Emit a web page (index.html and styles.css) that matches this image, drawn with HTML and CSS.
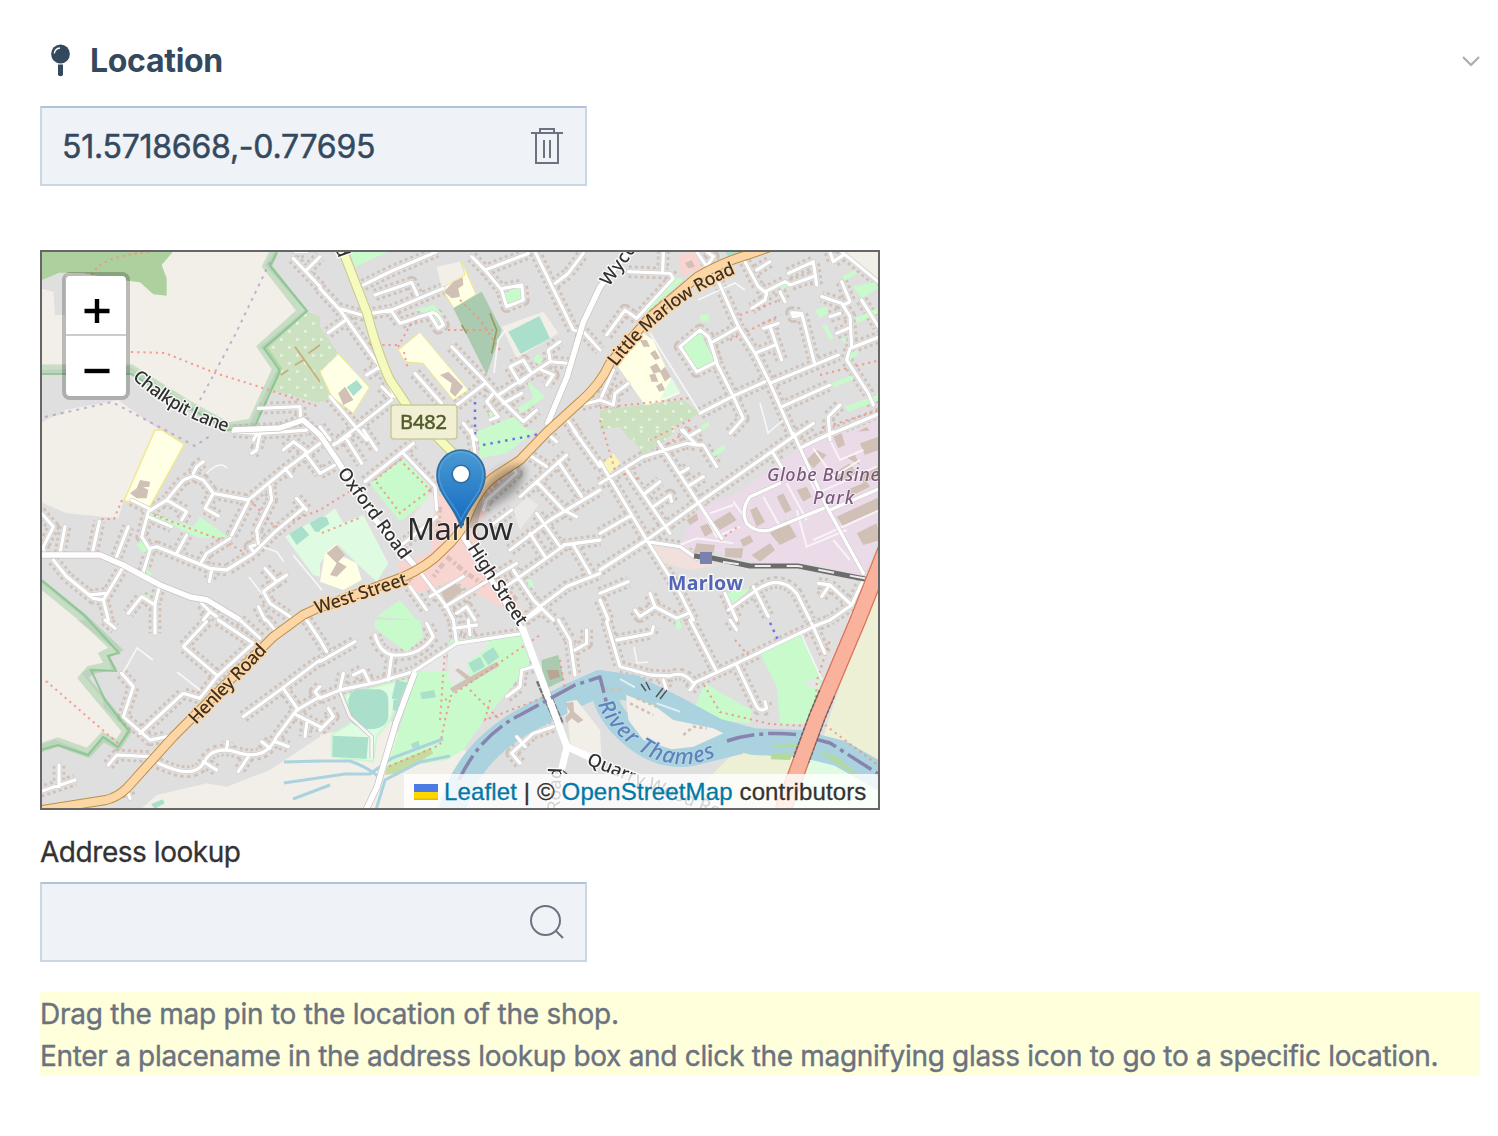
FILE: index.html
```html
<!DOCTYPE html>
<html lang="en">
<head>
<meta charset="utf-8">
<title>Location</title>
<link rel="stylesheet" href="styles.css">
</head>
<body>
<main class="panel">
  <header class="panel-head">
    <svg class="pin-icon" viewBox="0 0 22 34"><circle cx="10.500" cy="10" r="9.400" fill="#34495e"/><path d="M4.300 9.500Q5 4.500 10 4" fill="none" stroke="#fff" stroke-width="1.300"/><path d="M8 20.500H13V31Q10.500 33.500 8 31Z" fill="#34495e"/></svg>
    <h2 class="title">Location</h2>
    <svg class="chevron" viewBox="0 0 20 12"><path d="M2 2L10 10L18 2" fill="none" stroke="#a9adb3" stroke-width="2.200"/></svg>
  </header>

  <div class="field">
    <span class="value">51.5718668,-0.77695</span>
    <svg class="field-icon" viewBox="0 0 36 40"><path d="M2 7H34M11 6V3H25V6M7 8V37H29V8M15 14V32M21 14V32" fill="none" stroke="#6c7380" stroke-width="2"/></svg>
  </div>

  <div class="map">
    <svg class="tiles" viewBox="42 252 836 556">
      <defs>
        <pattern id="trees" width="48" height="48" patternUnits="userSpaceOnUse"><rect width="48" height="48" fill="#cbe1bf"/><circle cx="4" cy="28" r="5" fill="#e6f1de"/><circle cx="28" cy="4" r="5" fill="#e6f1de"/></pattern>
        <linearGradient id="pin" x2="0" y2="1"><stop offset="0" stop-color="#4a9bd4"/><stop offset="1" stop-color="#1268bf"/></linearGradient>
        <filter id="soft" x="-50%" y="-50%" width="200%" height="200%"><feGaussianBlur stdDeviation="4.500"/></filter>
        <g id="streets" fill="none" stroke-linejoin="round">
          <path transform="translate(40 250) scale(.33333)" d="M760 25L840 110M655 475L780 470L782 510M655 545L640 570M800 60L840 20M765 5L800 5M580 540L720 535L785 510L840 560"/>
          <path transform="translate(320 250) scale(.33333)" d="M0 115L60 180L180 350L225 440M55 175L125 195L215 180L370 115M130 105L210 65L350 5M165 135L275 97L292 135M212 180L240 220L330 190Q350 180 370 225L355 235L330 195M25 248L75 212M140 375L180 350M395 290L495 395L530 435L610 515L650 480M285 370L365 460M410 465L495 400M535 435L690 335L745 340M690 330L685 300L720 275M570 350L600 400L635 370L610 330ZM520 430L500 455L535 500L510 510M550 460L605 430M665 360L700 375L680 405M455 20L495 60L625 10M495 60L545 120L560 170L610 150L605 105L550 115M645 5L760 240L780 245M790 245L840 300M705 100L745 70L790 10M60 570L120 525L215 450M30 440L140 570M185 410L215 440M0 530L30 570M430 520L470 570M735 500L770 550M785 465L840 450"/>
          <path transform="translate(600 250) scale(.33333)" d="M20 255L75 180L110 205L220 85L210 70L85 65M188 65L190 5M290 5L320 50L340 20L320 5M355 95L415 230L465 310L510 400L580 560M340 275L415 232M240 290L300 240L325 260L350 335L290 365ZM330 270L350 340L400 440L430 505L390 550M300 490L400 438L495 395M510 400L715 315M545 470L690 405M465 310L525 285M490 235L535 220M512 235L545 330M605 195L580 200L575 188L605 190L645 345M435 35L475 110L500 130L495 150L455 175M495 125L555 95L570 105L640 80M470 60L510 35M565 70L640 35L650 105M540 125L555 155M725 5L840 100M690 5L700 35L730 15M580 560L640 520M650 570L840 490M690 570L685 500L720 465M820 465L805 430L740 330L750 295L840 260M755 290L750 200L725 160L665 140M725 95L750 155L730 165M690 200L720 190M710 250L745 235M785 150L835 230M250 540L265 560L300 540M0 450L40 465L45 430L85 400M40 360L5 440"/>
          <path transform="translate(40 430) scale(.33333)" d="M0 245L40 290L10 350L15 380M60 370L75 290M158 365L178 275M230 380L265 290M40 390L80 440L160 505L190 510L250 410M190 510L205 570M150 495L195 490M310 425L330 360L305 320L325 245L380 210L430 150L460 138L490 150L520 190L625 210L740 115L840 40M460 130L470 110L490 95M520 190L495 235L535 258M380 210L440 245L425 270M325 260L395 290M275 210L335 240M330 355L350 350L510 415L560 420L640 370L700 310L790 235M770 205L800 240M410 370L440 315M485 395L500 370L570 325M575 315L625 215M690 170L695 210L650 300L655 340M640 365L630 350L645 345M515 420L508 455M735 115L755 140M800 65L760 35L730 60M795 70L840 130M580 5L660 10L740 5L800 0M660 10L650 60L635 70M360 465L345 520L345 570M345 525L305 500L265 550M485 520L510 545L490 570M510 545L530 560M675 415L710 455L670 485L690 520L750 560M710 455L740 435M655 530L675 570"/>
          <path transform="translate(320 430) scale(.33333)" d="M135 155L280 40M250 70L345 170L350 240M75 20L125 100M0 130L45 105M40 45L90 15M130 0L170 60M245 345L350 260M455 0L465 70M490 240L500 210L590 130L575 105M600 200L740 75M620 70L680 110M650 155L730 240L770 260M715 95L785 200M570 360L690 270L840 180M630 310L675 380M720 350L650 250M730 345L840 330M375 530L590 400M330 500L430 440M550 475L735 345M760 345L810 430M610 570L660 530L740 470L840 430M580 420L640 510L700 570M280 400L380 530L400 570M270 470L320 540M410 550L440 530L465 570M760 0L840 110M680 10L710 35M515 285L575 240"/>
          <path transform="translate(600 430) scale(.33333)" d="M0 420L140 330L300 215L580 20M0 95L140 330L240 490L280 570M80 120L210 310M175 35L365 325M0 160L130 80L260 40L290 45M245 0L290 45L310 45L350 110M580 10L680 230L790 430M600 55L700 5M690 240L840 175M540 160L450 200Q420 240 440 280Q470 310 510 300L670 235M520 70L550 120M135 190L180 155M160 230L210 195L215 215M240 130L265 115M270 165L310 140M0 310L95 255M140 335L240 350L290 385M0 490L85 455M0 510L25 570M375 490L410 570M385 540L470 480Q540 430 590 490L630 570M460 470L505 560M105 540L120 560L165 530L150 490M165 530L230 565L265 550M655 460L690 465L755 525L690 570M665 500L685 470M755 525L790 450"/>
          <path transform="translate(40 620) scale(.33333)" d="M195 0L225 25M345 0L345 40M500 5L430 80L530 165M535 0L640 70M600 0L660 55M680 0L705 30M640 70L530 170L480 235L430 220L300 340M245 160L280 200L250 290L330 360L380 350M205 435L230 405L330 410M355 430Q460 480 490 430Q520 370 600 400Q680 420 710 350L770 270L840 230M490 425L530 450M560 385L563 365M625 410L595 455M705 365L745 380M665 365L690 385M610 290L720 210L840 120M730 205L775 270M770 285L840 320M800 310L795 350M0 515L105 480M57 500L57 435M840 200L825 215L840 235M800 0L840 60M265 520L270 535"/>
          <path transform="translate(320 620) scale(.33333)" d="M0 235L60 210L180 185L280 155L410 70L610 40M165 45Q180 100 220 105Q300 110 340 50L320 10M215 105L205 180M410 70L400 0M0 125L105 65M60 205L70 160M100 165L130 150L150 190M0 60L20 95M0 330L40 290L25 265M400 25L470 15M450 45L445 0M560 230L600 200L605 150L640 140M600 430L575 400L640 340L700 320M590 350L615 380M715 0L750 60L765 165M765 90L800 70L800 30M615 0L660 -30"/>
          <path transform="translate(600 620) scale(.33333)" d="M20 5L60 140L150 165L210 168Q250 150 280 190L410 130L640 20L690 0M50 60L155 40L160 20M270 0L350 155M410 135L465 250Q475 280 500 265L495 245M635 10L675 100M190 180L200 210M390 0L410 30M270 210L285 190"/>
        </g>
        <path id="primary" d="M36 811L106 800Q118 797 127 788L173 737L273 637L303 615Q316 608 330 604L403 577Q428 566 443 550Q460 535 466 520Q478 487 497 475L520 460L547 432L580 402Q600 385 610 363L650 317L697 277Q720 263 747 255L770 247"/>
        <path id="collectors" d="M640 240L628 252L600 287L583 323L567 377L547 425M233 430L280 428L303 420L320 435L337 460L373 517L414 565M42 555L100 555L123 565L160 585L190 597L207 600L240 620M461 533L480 563L500 593L524 633M415 672L396 723L377 787L366 810"/>
        <path id="yellow" d="M341 246L367 313Q378 355 390 380L408 407L443 443L460 460"/>
        <path id="lane" d="M132 378Q175 418 237 435"/>
        <path id="oxford" d="M337 473L403 562"/>
        <path id="river" d="M598 704Q612 738 650 757Q690 774 727 750"/>
        <path id="littlemarlow" d="M616 367Q667 300 742 271"/>
      </defs>

      <g class="raster">
      <rect x="40" y="250" width="840" height="560" fill="#dfdfdf"/>
      <g class="buildings"><use href="#streets"/></g>
      <g class="clear"><use href="#streets"/></g>

      <g transform="translate(40 250) scale(.33333)">
        <path fill="#f2efe9" d="M0 0H705L675 45L795 180L660 290L715 350L630 520L560 525L440 460L270 350L0 360ZM0 520L75 480L235 450L400 570H0Z"/>
        <path fill="#dfdfdf" d="M0 90L75 65V195L45 195L40 125L0 115ZM0 380L50 390L75 490L0 510Z"/>
        <path fill="#add19e" d="M0 0H403L365 45L380 85V137L340 133L300 97L245 90L130 70L60 68L0 92Z"/>
        <path fill="url(#trees)" d="M840 200L800 185L675 290L715 355L690 420L840 460Z"/>
        <path fill="none" stroke="#c6ad72" stroke-width="5" d="M765 290L840 395M722 375L745 360M765 345L790 330M805 310L840 285"/>
      </g>
      <g transform="translate(320 250) scale(.33333)">
        <path fill="url(#trees)" d="M0 230L55 310L0 370ZM0 370L40 440L0 460Z"/>
        <path fill="#c8facc" d="M90 5L205 5L105 50ZM552 130L600 110L608 145L562 162ZM620 390L675 440L605 490L590 475L640 445ZM470 545L580 500L630 545L540 570H470ZM285 180L340 165L365 190L350 225L325 190ZM640 325L655 310L670 330L655 345ZM505 485L525 490L510 505Z"/>
        <path fill="#f2efe9" d="M350 50L420 35L435 75L365 115ZM545 230L670 185L715 250L590 325Z"/>
        <path fill="#ffffe5" stroke="#f0e88a" stroke-width="3" d="M365 115L435 75L425 35L468 133L402 175ZM235 300L300 247L445 420L400 450L310 340L255 335ZM0 365L55 312L148 412L100 490L35 440Z"/>
        <path fill="#aacbaf" d="M400 175L485 125L545 240L500 375Z"/>
        <path fill="none" stroke="#9a9a5c" stroke-width="5" d="M510 190L530 240L515 310M425 225L440 250"/>
        <path fill="#aae0cb" d="M565 245L658 198L690 265L602 312ZM80 412L110 390L128 412L100 438Z"/>
        <path fill="#d0c0b6" d="M372 125L400 95L428 82L430 105L415 115L420 140L395 145ZM360 375L385 365L430 410L405 440L390 425L395 400ZM55 430L75 410L100 450L70 465Z"/>
      </g>
      <g transform="translate(600 250) scale(.33333)">
        <path fill="#f2efe9" d="M730 0H840V90Z"/>
        <path fill="#f8d5d1" d="M235 15L285 5L305 55L245 80Z"/>
        <path fill="#aae0cb" d="M375 5H450L390 25Z"/>
        <path fill="url(#trees)" d="M0 480L250 450L300 490L150 570H90L60 530L0 540Z"/>
        <path fill="#ffffe5" d="M50 345L130 250L160 270L210 380L240 430L180 455L135 465Z"/>
        <path fill="#dffce2" d="M200 410L215 385L240 425L180 450Z"/>
        <path fill="#c8facc" d="M250 290L300 245L345 335L290 360ZM300 195L328 192L325 215L302 213ZM110 195L230 80L250 90L120 205ZM540 108L560 98L562 112L545 120ZM725 80L765 60L770 72L735 92ZM760 110L825 95L835 115L785 145ZM645 180L680 170L685 190L660 205ZM665 225L680 225L700 265L690 270ZM695 400L755 375L760 390L700 412ZM735 470L840 430V450L745 485ZM300 530L325 515L330 525L305 543ZM765 205L830 175L835 190L770 220ZM740 315L770 300L775 312L745 335ZM720 265L740 265L735 280Z"/>
        <path fill="#ebdbe8" d="M690 570L840 505V570Z"/>
        <path fill="#d0c0b6" d="M120 270L140 270L150 290L130 290ZM150 310L165 300L180 325L165 330ZM150 350L170 340L185 365L160 370ZM148 375L165 370L175 395L155 395ZM180 365L195 350L212 380L195 395ZM168 408L185 398L195 420L178 425ZM765 550L800 530L830 570H770ZM255 40L275 30L285 50L265 55Z"/>
      </g>
      <g transform="translate(40 430) scale(.33333)">
        <path fill="#f2efe9" d="M0 0H355L250 215L235 265L80 250L0 215ZM0 455L140 570H0Z"/>
        <path fill="#ffffe5" stroke="#f0e88a" stroke-width="4" d="M345 0L365 0L433 43L330 230L252 212Z"/>
        <path fill="#c8facc" d="M300 240L460 290L480 260L565 320L480 325L330 255ZM290 345L310 330L328 358L310 370ZM315 415L340 430L325 440ZM305 490L330 500L325 510Z"/>
        <path fill="#dffce2" d="M735 320L840 260V440L820 435Z"/>
        <path fill="#aae0cb" d="M748 312L785 288L808 315L770 345ZM808 280L840 260V305H825Z"/>
        <path fill="#d0c0b6" d="M300 150L330 155L328 170L310 172L325 180L320 205L290 205L270 190L290 175Z"/>
      </g>
      <g transform="translate(320 430) scale(.33333)">
        <path fill="#f8d5d1" d="M350 200L400 180L500 120L570 130L490 220L500 240L470 300L480 330L460 370L480 400L560 480L620 560L580 540L520 520L400 450L330 480L270 490L230 400L330 370Z"/>
        <path fill="none" stroke="#dcc0b8" stroke-width="14" stroke-dasharray="18 9 8 7" d="M360 230L350 330M490 200L550 140M440 340L470 370L530 440L590 510M340 390L290 420L260 460M380 380L440 430L500 470M370 400L340 440"/>
        <path fill="#eae9e7" d="M270 270L330 190L355 200L340 270L300 290ZM580 240L620 200L655 225L600 300Z"/>
        <path fill="#c8facc" d="M150 160L250 85L330 170L320 210L240 275ZM475 5L650 0L560 70L480 85ZM170 560L240 510L290 570ZM618 445L635 450L645 480L625 465Z"/>
        <path fill="#dffce2" d="M0 270L45 235L70 280L130 255L205 400L170 455L110 400L50 340L0 400Z"/>
        <path fill="#aae0cb" d="M0 260L20 262L28 282L0 300Z"/>
        <path fill="#ffffe5" d="M15 370L50 340L70 380L110 400L125 450L70 480L0 455Z"/>
        <path fill="#d0c0b6" d="M20 370L50 345L75 375L55 395L80 410L50 440L30 435L50 400ZM360 480L400 455L430 480L380 520ZM430 250L445 260L460 215L490 200L470 300L440 290Z"/>
      </g>
      <g transform="translate(600 430) scale(.33333)">
        <path fill="#ebdbe8" d="M240 350L290 240L430 180L590 60L700 10L840 0V320L790 440L640 400L480 400L330 360Z"/>
        <path fill="#f2e0dc" d="M150 345L240 360L290 395L360 405L270 420L190 400Z"/>
        <path fill="url(#trees)" d="M80 0H230L190 35L130 75Z"/>
        <path fill="#f8f3b8" d="M5 105L40 70L62 100L30 130Z"/>
        <path fill="#c8facc" d="M335 70L370 45L378 58L342 80ZM370 490L455 475L390 528Z"/>
        <path fill="#d0c0b6" d="M290 340L345 345L340 370L280 370ZM375 355L430 355L425 385L375 380ZM455 375L510 340L525 360L480 395ZM510 310L560 270L590 320L540 345ZM620 90L650 60L680 75L640 115ZM710 260L840 200V240L730 290ZM340 275L390 245L410 270L360 300ZM300 290L325 280L340 305L315 320ZM450 240L470 230L495 275L470 290ZM530 200L550 190L575 240L555 250ZM700 130L750 100L770 130L720 155ZM770 310L830 280L840 330L790 345ZM700 20L725 10L735 45L715 55ZM420 330L450 315L460 335L430 350ZM735 80L765 75L780 105ZM590 180L620 170L635 200L610 215ZM780 40L835 20V60L795 75ZM780 130L835 110V140L790 160ZM740 180L800 155L810 170L750 200ZM260 270L290 250L295 270L270 285Z"/>
        <path fill="none" stroke="#f8f3f7" stroke-width="6" d="M640 55L700 140L780 90M610 110L650 190L830 110M490 200L540 290M590 240L620 350L740 300M640 330L840 240M300 230L350 320L420 290M400 215L440 270M690 30L720 90L790 60M240 345L290 325L400 340M330 250L400 225M560 160L620 270M700 330L750 390"/>
      </g>
      <g transform="translate(40 620) scale(.33333)">
        <path fill="#f2efe9" d="M0 0H110L235 95L200 105L215 150L150 145L125 160L190 240V260L260 330L235 375L190 345L145 400L45 360L0 375ZM300 570L350 525L500 490L560 500L690 450L840 350V570Z"/>
        <path fill="#aae0cb" d="M333 552L368 538L374 550L345 566Z"/>
      </g>
      <g transform="translate(320 620) scale(.33333)">
        <path fill="#f2efe9" d="M0 345L210 300L270 400L440 390L380 570H0Z"/>
        <path fill="#c8facc" d="M290 155H380L390 60L600 45L630 130L560 220L500 290L430 390L380 420L200 450ZM165 0H300L310 50L260 95L210 60L165 25ZM505 60L600 40L600 60Z"/>
        <path fill="#dffce2" stroke="#c8facc" stroke-width="5" d="M75 225L210 190L260 180L210 300L170 350L160 425L35 410V345L100 305Z"/>
        <path fill="#aae0cb" d="M110 208H180Q205 215 205 240V290Q200 325 150 328Q90 325 85 280V240Q90 215 110 208ZM38 347L145 352L140 417L37 410ZM228 180L262 188L240 240L215 236ZM220 240L242 238L235 275L218 270ZM445 130L480 110L495 140L460 158ZM485 105L520 82L538 110L505 135ZM300 218L342 210L348 232L306 238ZM272 372L295 362L300 378L280 388Z"/>
        <path fill="#e9e8e8" d="M385 75L505 60L500 85L440 130L450 160L400 200L385 170ZM285 155L380 90L375 155Z"/>
        <path fill="#d0c0b6" d="M390 205L530 125L538 138L400 218ZM405 150L415 145L450 170L440 180Z"/>
        <path fill="#aacbaf" d="M665 120L715 105L732 180L670 210Z"/>
        <path fill="#b9a595" d="M680 150L715 150L720 170L690 180Z"/>
        <path fill="#c6dba0" d="M200 440L330 385L340 400L240 460L195 465Z"/>
        <path fill="none" stroke="#cdc6c4" stroke-width="13" d="M60 215L90 290L155 350L155 415"/>
        <path fill="none" stroke="#f7f7f7" stroke-width="8" d="M60 215L90 290L155 350L155 415"/>
      </g>
      <g transform="translate(600 620) scale(.33333)">
        <path fill="#eef0d5" d="M815 -90L840 -120V470L670 350ZM320 480L400 400L520 400L600 400V570H320Z"/>
        <path fill="#c8facc" d="M480 100L600 45L665 175L640 310L540 315L530 200ZM315 190L400 240L455 270L450 310L350 300L280 270ZM225 0H240L245 25L230 30Z"/>
        <path fill="#e8e6e6" d="M612 190L655 170V210Z"/>
        <path fill="#dffce2" d="M625 400L840 470V570H570Z"/>
        <path fill="none" stroke="#aad3df" stroke-width="80" stroke-linejoin="round" d="M-450 600Q-420 420 -240 310L-90 230L0 190L100 205L220 265L350 335L460 365L600 370L720 400L860 480"/>
        <path fill="none" stroke="#aad3df" stroke-width="74" stroke-linejoin="round" d="M10 190Q10 270 90 340Q180 420 280 400L420 365"/>
        <path fill="#f2efe9" d="M78 225L160 255L220 300L340 325L370 340L280 380L215 388L130 360L85 300Z"/>
        <path fill="none" stroke="#d0c0b6" stroke-width="8" stroke-dasharray="10 9" d="M15 205L70 212M110 235L170 260M90 250L160 285M250 345L280 320L320 325"/>
        <path fill="#f2efe9" d="M-100 245L-70 240L0 330L5 420L-90 370Z"/>
        <path fill="#d0c0b6" d="M-105 250L-80 245L-78 275L-50 300L-65 310L-85 295L-100 310L-105 295L-90 275Z"/>
        <path fill="#b3d99b" d="M515 402L580 400L570 420L512 418ZM515 375L600 372L600 382H520ZM650 390L710 410L780 470L740 450Z"/>
        <path stroke="#e4eff2" stroke-width="6" d="M60 177L105 202M170 250L240 275"/>
      </g>

      <g fill="none" stroke="#aad3df" stroke-width="3"><path d="M284 762L320 761L350 761Q365 766 378 776M284 783L345 774L370 774L392 758L443 739M293 799L330 785M376 810L385 780L420 762L450 756"/></g>
      <g fill="none" stroke="#86c28c" opacity=".4" stroke-width="9"><path d="M274 252L267 266L302 311L262 347L277 369L252 423L228 427L190 406L131 369L42 369M40 583L82 617L116 649L104 655L110 666L90 670L83 678L103 702L127 731L118 745L103 737L88 753L58 742L40 748"/></g>
      <g fill="none" stroke="#7fc185" opacity=".75" stroke-width="2"><path d="M277 252L270 266L307 311L264 348L280 371L255 426L228 430L131 374L42 374M40 579L84 615L119 653L108 656L116 671L91 670L105 700L129 731L118 747L103 737L88 755L58 745L40 750"/></g>
      <g class="paths"><path d="M131 352L165 353L215 373L260 387L320 407M92 275Q100 256 150 252M46 681L120 745M122 500L114 519L100 519M154 515L205 534L225 541L243 552M250 500L275 527L320 510L355 488M450 700L445 720L440 745L380 770M445 700L540 635M490 700L485 720L550 695M470 690L500 720M704 685L720 712L770 724L810 726M398 347L410 325L425 315M404 352L408 370M370 345L400 345M460 300L480 320L500 350M448 330L495 330M600 408L690 398M690 420L650 440M820 375L880 360M822 428L880 410M740 315L780 300M730 340L780 315M735 640L748 655M825 725L878 765M445 650L440 720M375 480L400 460L430 490L400 513ZM322 533L362 517M600 420L615 470L640 480M690 430L640 460M815 710L817 680L830 640M560 660L565 690M720 540L740 525"/></g>
      <g fill="none" stroke="#b49bc4" opacity=".75" stroke-width="2" stroke-dasharray="3 5"><path d="M270 262L235 335L200 400M45 417L112 402L165 430L195 446L210 436"/></g>
      <g fill="none" stroke="#6a74e8" stroke-width="2.500" stroke-dasharray="2.500 5"><path d="M475 402V440M483 445L540 434M767 616L778 640"/></g>

      <g fill="none" stroke="#f7f7f7" stroke-width="1.600"><path d="M650 333L700 413M760 403L768 433L783 420M698 300L735 283L745 290M494 373L498 340L506 330M293 555L322 590M263 547L277 552L284 562M207 473Q220 460 227 468M122 675L137 648L153 660M177 672L200 690M801 634L822 680M634 647L637 663L648 662M249 577L262 594"/></g>
      <g class="casing"><use href="#streets"/></g>
      <g class="surface"><use href="#streets"/></g>
      <g fill="none" stroke-linejoin="round">
        <use href="#collectors" stroke="#c8c4c4" stroke-width="7"/>
        <use href="#collectors" stroke="#fff" stroke-width="5.500"/>
        <path stroke="#777" stroke-width="9" stroke-dasharray="6 1" d="M540 680L560 725"/>
        <path stroke="#fff" stroke-width="7" d="M522 627L567 747L561 772M566 746L600 762"/>
        <path stroke="#8884ae" stroke-width="3.500" stroke-dasharray="28 5 4 5" d="M459 780Q480 735 520 715L575 685L600 677L607 705M727 741Q760 730 800 735L830 743L880 775"/>
        <use href="#yellow" stroke="#c5cc82" stroke-width="10"/>
        <use href="#yellow" stroke="#f7fabf" stroke-width="8"/>
        <use href="#primary" stroke="#bd8f46" stroke-width="10"/>
        <use href="#primary" stroke="#fcd6a4" stroke-width="8"/>
        <path stroke="#6c6c6c" stroke-width="5" d="M694 556L712 558L750 566L798 566L870 580"/>
        <path stroke="#eee" stroke-width="2" stroke-dasharray="16 16" d="M723 562L750 566L798 566L868 579"/>
        <path stroke="#dc705b" stroke-width="17" d="M886 549L858 620L817 717L783 810"/>
        <path stroke="#666" stroke-width="17.500" stroke-dasharray="4 1" d="M827 693L817 717L801 760"/>
        <path stroke="#f9b29c" stroke-width="14.500" d="M886 549L858 620L817 717L783 810"/>
      </g>
      <rect x="700" y="552" width="12" height="12" fill="#7981b0"/>
      <path fill="none" stroke="#555" stroke-width="1.500" d="M641 684L646 691M646 682L650 690M656 697L663 688M660 699L667 690M555 772L562 770L567 774"/>

      <g class="label road">
        <text><textPath href="#lane" textLength="110">Chalkpit Lane</textPath></text>
        <text><textPath href="#oxford" textLength="109">Oxford Road</textPath></text>
        <text transform="translate(467 548) rotate(57)" textLength="94">High Street</text>
        <text transform="translate(609 287) rotate(-54)" textLength="48">Wyco</text>
        <text transform="translate(586 764) rotate(22)" textLength="164">Quarry Wood Road</text>
        <text transform="translate(560 812) rotate(-88)">Road</text>
        <text transform="translate(335 248) rotate(70)">d</text>
      </g>
      <g class="label main">
        <text><textPath href="#littlemarlow" textLength="154">Little Marlow Road</textPath></text>
        <text transform="translate(317 614) rotate(-18)" textLength="96">West Street</text>
        <text transform="translate(196 725) rotate(-46)" textLength="103">Henley Road</text>
      </g>
      <text class="label river"><textPath href="#river" textLength="144">River Thames</textPath></text>
      <g class="label estate"><text x="767" y="481" textLength="130">Globe Business</text><text x="813" y="504" textLength="41">Park</text></g>
      <text class="label station" x="668" y="590" textLength="75">Marlow</text>
      <rect x="391" y="405" width="66" height="34" rx="3" fill="#f1f0d5" stroke="#c9cc98" stroke-width="1.500"/>
      <text class="shield" x="400" y="429" textLength="47">B482</text>
      <text class="label town" x="407" y="540" textLength="106">Marlow</text>
      </g>

      <path d="M464 526L480 490Q497 465 522 464Q530 476 513 494Z" fill="#000" opacity=".3" filter="url(#soft)"/>
      <path d="M461 528C456 507 437 495 437 475A24 25 0 0 1 485 475C485 495 466 507 461 528Z" fill="url(#pin)" stroke="#2e6d9f" stroke-width="1.600"/>
      <path d="M461 520C455 504 439 493 439 475A22 23 0 0 1 483 475C483 493 467 504 461 520Z" fill="none" stroke="#6db2df" opacity=".45" stroke-width="1.500"/>
      <circle cx="461" cy="474" r="8.800" fill="#fff" stroke="#2e6d9f" stroke-width="1.600"/>
    </svg>
    <div class="zoom">
      <button class="zoom-btn" aria-label="Zoom in"><svg viewBox="0 0 26 26"><path d="M0.500 13H25.500M13 1V25" stroke="#000" stroke-width="4.400"/></svg></button>
      <button class="zoom-btn" aria-label="Zoom out"><svg viewBox="0 0 26 26"><path d="M0.500 13H25.500" stroke="#000" stroke-width="4.400"/></svg></button>
    </div>
    <div class="credit"><svg class="flag" viewBox="0 0 24 16"><path fill="#4c7be1" d="M0 0h24v8H0z"/><path fill="#ffd500" d="M0 8h24v7H0z"/><path fill="#e0bc00" d="M0 14.500h24v1.500H0z"/></svg><a>Leaflet</a> <span class="bar">|</span> © <a>OpenStreetMap</a> contributors</div>
  </div>

  <label class="lookup-label">Address lookup</label>
  <div class="field">
    <span class="value"></span>
    <svg class="field-icon" viewBox="0 0 36 40"><circle cx="16.500" cy="18.500" r="14.500" fill="none" stroke="#6c7380" stroke-width="2"/><path d="M26.500 28.500L34 36" stroke="#6c7380" stroke-width="2"/></svg>
  </div>

  <p class="help"><span class="line one">Drag the map pin to the location of the shop.</span><span class="line two">Enter a placename in the address lookup box and click the magnifying glass icon to go to a specific location.</span></p>
</main>
</body>
</html>
```

FILE: styles.css
```css
* { box-sizing: border-box; }
body { margin: 0; background: #fff; font-family: Inter, "Liberation Sans", sans-serif; color: #34495e; }
.panel { display: flex; flex-direction: column; align-items: flex-start; padding: 38px 18px 0 40px; }
.panel-head { display: flex; align-items: center; align-self: stretch; height: 46px; padding-left: 10px; margin-bottom: 22px; }
.pin-icon { width: 22px; height: 34px; }
.title { margin: 0 auto 0 18px; font-size: 32px; line-height: 46px; font-weight: 700; letter-spacing: -0.3px; }
.chevron { width: 20px; height: 12px; margin-right: -1px; }
.field { display: flex; align-items: center; justify-content: space-between; width: 547px; height: 80px; padding: 0 20px 0 20px; background: #eff3f8; border: 2px solid #c9d6e4; border-top-color: #afc3da; }
.value { font-size: 32px; letter-spacing: -0.25px; padding-top: 1px; -webkit-text-stroke: 0.5px currentColor; }
.field-icon { width: 36px; height: 40px; }
.map { position: relative; width: 840px; height: 560px; margin-top: 64px; border: 2px solid #666; overflow: hidden; }
.tiles { display: block; width: 836px; height: 556px; }
.raster { filter: blur(0.5px); }
.buildings { stroke: #d0c2b8; stroke-width: 38px; stroke-dasharray: 9 9; }
.buildings, .clear, .casing, .surface { fill: none; }
.clear { stroke: #dfdfdf; stroke-width: 21px; }
.casing { stroke: #cbc7c6; stroke-width: 13px; stroke-linecap: round; }
.surface { stroke: #fff; stroke-width: 10px; stroke-linecap: round; }
.paths { fill: none; stroke: #f58f80; stroke-width: 2px; stroke-dasharray: 2.2 4; opacity: .85; }
.label { font-family: "Noto Sans", "Open Sans", sans-serif; paint-order: stroke; stroke-linejoin: round; font-size: 18px; font-weight: 500; }
.road { fill: #303030; stroke: rgba(255, 255, 255, .75); stroke-width: 3px; }
.main { fill: #3f3022; stroke: #fcd6a4; stroke-width: 3px; }
.river { fill: #5f84bd; stroke: rgba(190, 220, 232, .6); stroke-width: 2px; font-style: italic; font-size: 22px; }
.estate { fill: #7b5a7d; stroke: rgba(255, 255, 255, .5); stroke-width: 2px; font-style: italic; }
.station { fill: #5565b5; stroke: rgba(255, 255, 255, .75); stroke-width: 3px; font-weight: 700; font-size: 19.5px; }
.town { fill: #2b2b2b; stroke: rgba(255, 255, 255, .5); stroke-width: 2px; font-size: 31px; font-weight: 400; }
.shield { font-family: "Noto Sans", sans-serif; font-size: 20px; fill: #525a2a; stroke: #525a2a; stroke-width: .5px; }
.zoom { position: absolute; left: 20px; top: 20px; width: 68px; height: 128px; border: 4px solid rgba(0, 0, 0, .22); border-radius: 8px; background: #fff; background-clip: padding-box; }
.zoom-btn { display: flex; align-items: center; justify-content: center; width: 60px; height: 60px; padding: 10px 0 0 1px; border: 0; background: none; }
.zoom-btn:first-child { padding-top: 12px; border-bottom: 2px solid #ccc; }
.zoom-btn svg { width: 26px; height: 26px; }
.credit { position: absolute; right: 0; bottom: 0; width: 474px; height: 34px; padding-left: 10px; background: rgba(255, 255, 255, .8); font: 24px/35px "Liberation Sans", Arial, sans-serif; color: #333; white-space: nowrap; letter-spacing: 0.13px; -webkit-text-stroke: 0.3px currentColor; }
.credit a { color: #0078a8; }
.flag { width: 24px; height: 16px; margin-right: 6px; }
.lookup-label { margin: 22px 0 10px; font-size: 28px; line-height: 40px; color: #333; letter-spacing: -0.45px; -webkit-text-stroke: 0.3px currentColor; }
.help { align-self: stretch; margin: 30px 0 0; background: #ffffdb; color: #6b7280; font-size: 28px; line-height: 42px; height: 84px; padding-top: 1px; white-space: nowrap; -webkit-text-stroke: 0.4px currentColor; }
.line { display: block; }
.one { letter-spacing: -0.24px; }
.two { letter-spacing: -0.31px; }
```
